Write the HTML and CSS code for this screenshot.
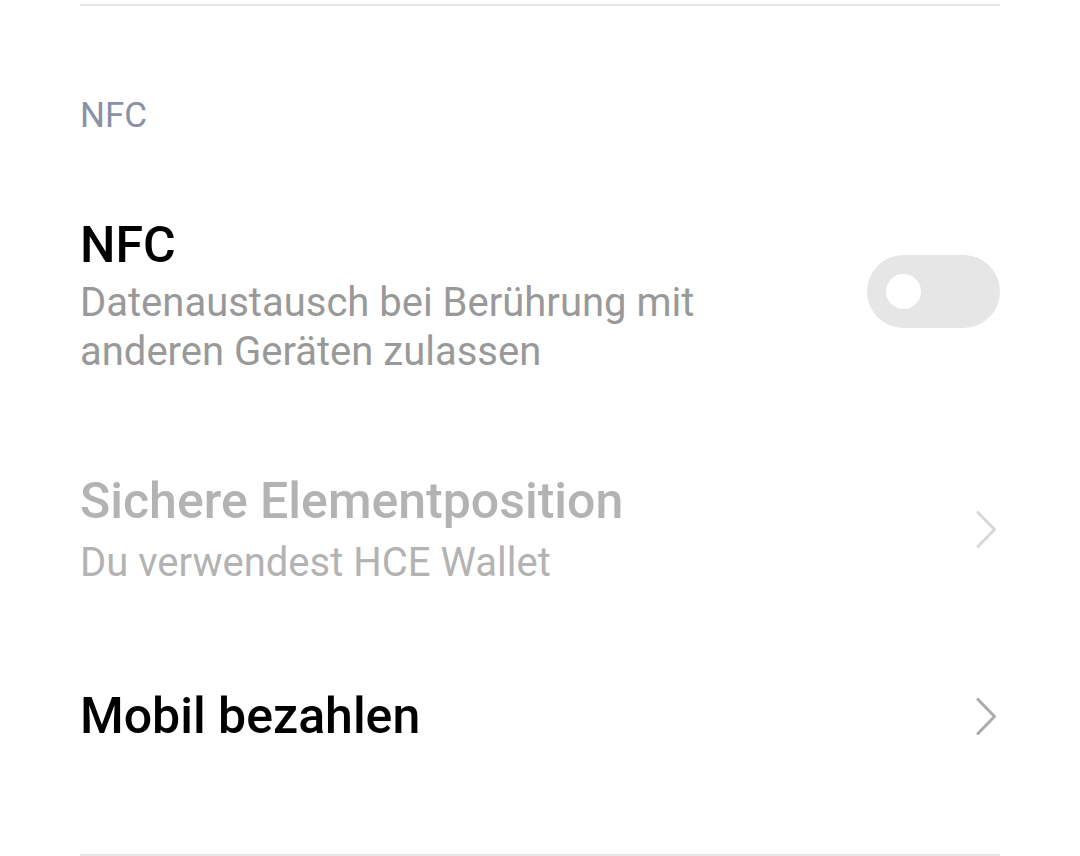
FILE: index.html
```html
<!DOCTYPE html>
<html lang="de">
<head>
    <meta charset="UTF-8">
    <title>NFC</title>
    <link rel="stylesheet" href="styles.css">
</head>
<body>
    <div class="page">
        <div class="divider top"></div>
        <div class="section-title">NFC</div>

        <div class="row row-nfc">
            <div class="text">
                <div class="title">NFC</div>
                <div class="summary">Datenaustausch bei Berührung mit<br>anderen Geräten zulassen</div>
            </div>
            <div class="switch"><div class="knob"></div></div>
        </div>

        <div class="row row-disabled">
            <div class="text">
                <div class="title">Sichere Elementposition</div>
                <div class="summary">Du verwendest HCE Wallet</div>
            </div>
            <svg class="chevron" width="21" height="37" viewBox="0 0 21 37">
                <path d="M2 1.5 L18.5 18.5 L2 35.5" fill="none" stroke="#d8d8d8" stroke-width="3" stroke-linecap="round" stroke-linejoin="round"/>
            </svg>
        </div>

        <div class="row row-pay">
            <div class="text">
                <div class="title">Mobil bezahlen</div>
            </div>
            <svg class="chevron" width="21" height="37" viewBox="0 0 21 37">
                <path d="M2 1.5 L18.5 18.5 L2 35.5" fill="none" stroke="#ababab" stroke-width="3" stroke-linecap="round" stroke-linejoin="round"/>
            </svg>
        </div>

        <div class="divider bottom"></div>
    </div>
</body>
</html>
```

FILE: styles.css
```css
body {
    margin: 0;
    background: #ffffff;
    font-family: Roboto, 'Noto Sans', sans-serif;
}

.page {
    padding: 0 80px;
    display: flex;
    flex-direction: column;
}

.divider {
    height: 2px;
    background: #e6e6e6;
}

.divider.top {
    margin-top: 4px;
}

.section-title {
    margin-top: 88px;
    font-size: 35px;
    line-height: 44px;
    color: #8a90a6;
}

.row {
    display: flex;
    align-items: center;
    justify-content: space-between;
}

.text {
    display: flex;
    flex-direction: column;
}

.title {
    font-size: 50px;
    font-weight: 500;
    line-height: 60px;
    color: #000;
}

.summary {
    margin-top: 3px;
    font-size: 40px;
    line-height: 49px;
    color: #999999;
}

.row-nfc {
    margin-top: 77px;
}

.switch {
    width: 133px;
    height: 73px;
    border-radius: 37px;
    background: #e6e6e6;
    display: flex;
    align-items: center;
    margin-bottom: 8px;
}

.knob {
    width: 35px;
    height: 35px;
    border-radius: 50%;
    background: #fff;
    margin-left: 19px;
}

.row-disabled {
    margin-top: 95px;
}

.row-disabled .summary {
    margin-top: 7px;
}

.row-disabled .title,
.row-disabled .summary {
    color: #b3b3b3;
}

.row-pay {
    margin-top: 99px;
}

.chevron {
    margin-right: 3px;
}

.divider.bottom {
    margin-top: 108px;
}
```
